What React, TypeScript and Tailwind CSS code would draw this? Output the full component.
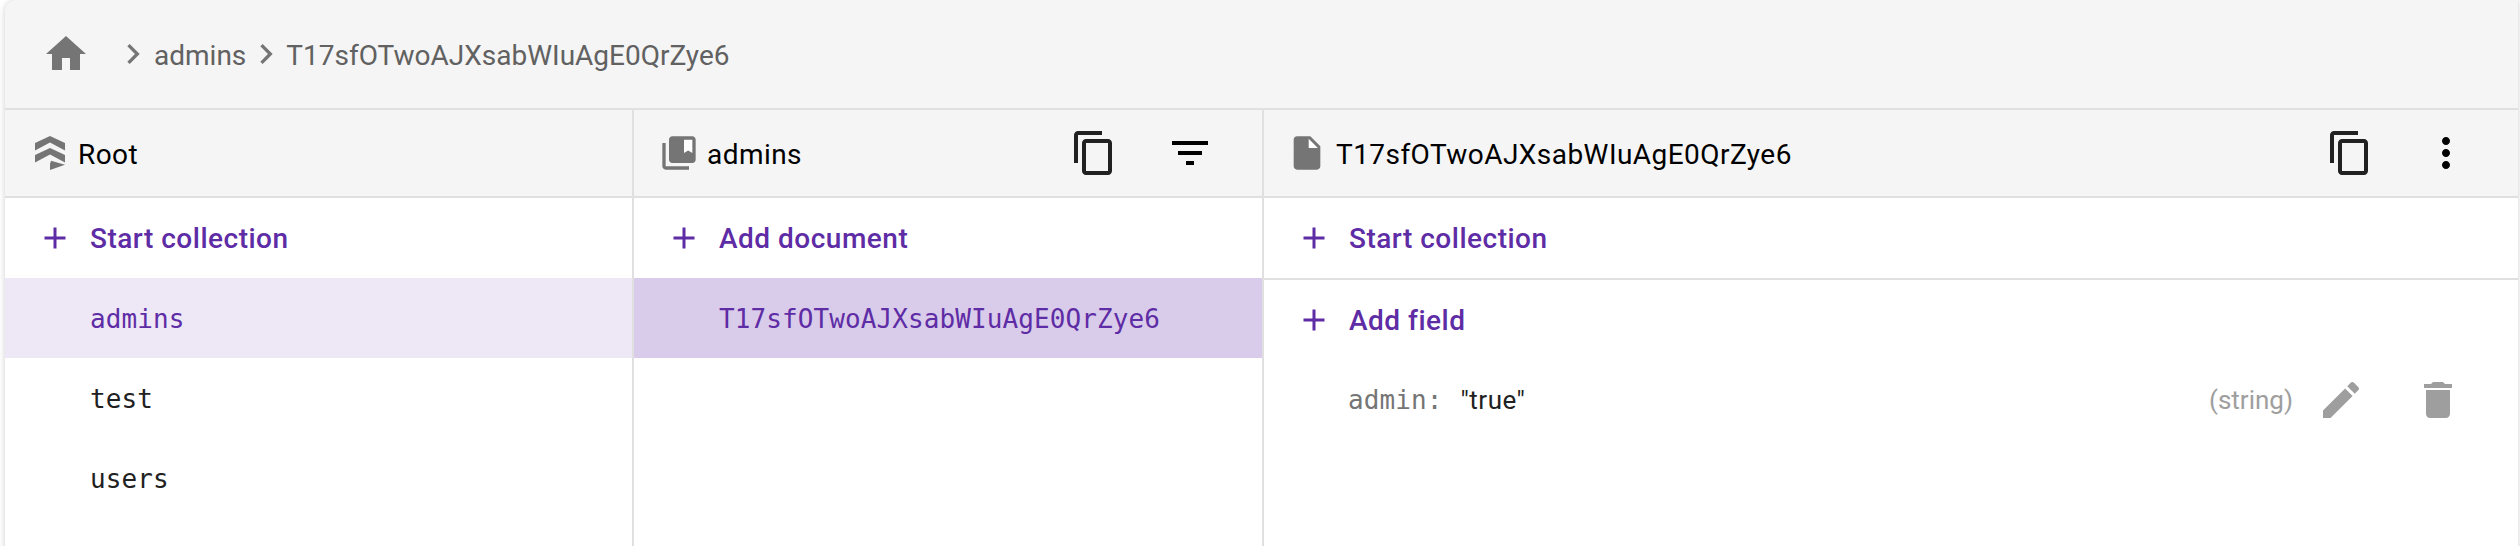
function Icon({ d, className }: { d: string; className: string }) {
  return (
    <svg viewBox="0 0 24 24" fill="currentColor" className={className}>
      <path d={d} />
    </svg>
  );
}

const HOME = "M10 20v-6h4v6h5v-8h3L12 3 2 12h3v8z";
const CHEVRON = "M10 6L8.59 7.41 13.17 12l-4.58 4.59L10 18l6-6z";
const ADD = "M19 13h-6v6h-2v-6H5v-2h6V5h2v6h6v2z";
const COPY =
  "M16 1H4c-1.1 0-2 .9-2 2v14h2V3h12V1zm3 4H8c-1.1 0-2 .9-2 2v14c0 1.1.9 2 2 2h11c1.1 0 2-.9 2-2V7c0-1.1-.9-2-2-2zm0 16H8V7h11v14z";
const FILTER = "M10 18h4v-2h-4v2zM3 6v2h18V6H3zm3 7h12v-2H6v2z";
const MORE =
  "M12 8c1.1 0 2-.9 2-2s-.9-2-2-2-2 .9-2 2 .9 2 2 2zm0 2c-1.1 0-2 .9-2 2s.9 2 2 2 2-.9 2-2-.9-2-2-2zm0 6c-1.1 0-2 .9-2 2s.9 2 2 2 2-.9 2-2-.9-2-2-2z";
const EDIT =
  "M3 17.25V21h3.75L17.81 9.94l-3.75-3.75L3 17.25zM20.71 7.04c.39-.39.39-1.02 0-1.41l-2.34-2.34c-.39-.39-1.02-.39-1.41 0l-1.83 1.83 3.75 3.75 1.83-1.83z";
const TRASH = "M6 19c0 1.1.9 2 2 2h8c1.1 0 2-.9 2-2V7H6v12zM19 4h-3.5l-1-1h-5l-1 1H5v2h14V4z";

function RootIcon() {
  return (
    <svg viewBox="0 0 30 34" fill="#757575" className="w-[30px] h-[34px] shrink-0">
      <path d="M0 7 15 0l15 7v7.5L15 6.5 0 14.5z" />
      <path d="M0 19l15-7 15 7v7.5l-15-8-15 8z" />
      <path d="M16 24.7l14 4L15 34v-6z" />
    </svg>
  );
}

function CollectionIcon() {
  return (
    <svg viewBox="0 0 24 24" className="w-10 h-10 shrink-0">
      <path
        fill="#757575"
        d="M4 6H2v14c0 1.1.9 2 2 2h14v-2H4V6zm16-4H8c-1.1 0-2 .9-2 2v12c0 1.1.9 2 2 2h12c1.1 0 2-.9 2-2V4c0-1.1-.9-2-2-2z"
      />
      <path fill="#ffffff" d="M20 12l-2.5-1.5L15 12V4h5v8z" />
    </svg>
  );
}

function DocIcon() {
  return (
    <svg viewBox="0 0 24 24" className="w-10 h-10 shrink-0">
      <path fill="#757575" d="M6 2c-1.1 0-1.99.9-1.99 2L4 20c0 1.1.89 2 1.99 2H18c1.1 0 2-.9 2-2V8l-6-6H6z" />
      <path fill="#ffffff" d="M13 9V3.5L18.5 9H13z" />
    </svg>
  );
}

function ActionRow({ label, border }: { label: string; border?: boolean }) {
  return (
    <div
      className={`h-20 flex items-center gap-[17px] pl-8 text-[#5e2ca5] font-medium text-[28px] tracking-[0.5px] ${
        border ? "box-content border-b-2 border-[#e0e0e0]" : ""
      }`}
    >
      <Icon d={ADD} className="w-9 h-9 shrink-0" />
      <span className="pt-px">{label}</span>
    </div>
  );
}

const MONO = "font-['DejaVu_Sans_Mono',monospace] text-[26px] tracking-[0.1px]";

export default function App() {
  return (
    <div className="h-[546px] w-[2520px] overflow-hidden bg-white font-['Roboto',sans-serif]">
      <div className="ml-[5px] mr-[2px] h-[600px] rounded-tl-[12px] bg-white shadow-[0_0_6px_rgba(0,0,0,0.2)] overflow-hidden">
        {/* breadcrumb */}
        <div className="box-content h-[108px] bg-[#f5f5f5] border-b-2 border-[#e0e0e0] flex items-center pl-[37px] text-[28px] text-[#616161]">
          <Icon d={HOME} className="w-12 h-12 mr-[23px] text-[#757575]" />
          <Icon d={CHEVRON} className="w-10 h-10 text-[#757575]" />
          <span className="ml-px pt-[3px]">admins</span>
          <Icon d={CHEVRON} className="w-10 h-10 text-[#757575]" />
          <span className="pt-[3px]">T17sfOTwoAJXsabWIuAgE0QrZye6</span>
        </div>

        <div className="flex">
          {/* root column */}
          <div className="w-[629px] shrink-0 border-r-2 border-[#e0e0e0] h-[440px]">
            <div className="h-[88px] bg-[#f5f5f5] border-b-2 border-[#e0e0e0] flex items-center gap-[13px] pl-[30px] text-[28px] tracking-[0.45px] text-black">
              <RootIcon />
              <span className="pt-[3px]">Root</span>
            </div>
            <ActionRow label="Start collection" />
            <div className={`h-20 flex items-center pl-[85px] pt-[3px] bg-[#ede7f6] text-[#5e2ca5] ${MONO}`}>admins</div>
            <div className={`h-20 flex items-center pl-[85px] pt-[3px] text-[#212121] ${MONO}`}>test</div>
            <div className={`h-20 flex items-center pl-[85px] pt-[3px] text-[#212121] ${MONO}`}>users</div>
          </div>

          {/* documents column */}
          <div className="w-[630px] shrink-0 border-r-2 border-[#e0e0e0] h-[440px]">
            <div className="h-[88px] bg-[#f5f5f5] border-b-2 border-[#e0e0e0] flex items-center pl-[25px] text-[28px] tracking-[0.45px] text-black">
              <CollectionIcon />
              <span className="ml-2 pt-[3px]">admins</span>
              <Icon d={COPY} className="w-12 h-12 ml-auto text-[#212121]" />
              <Icon d={FILTER} className="w-12 h-12 mx-12 text-black" />
            </div>
            <ActionRow label="Add document" />
            <div className={`h-20 flex items-center pl-[85px] pt-[3px] bg-[#d9cbea] text-[#5e2ca5] ${MONO}`}>
              T17sfOTwoAJXsabWIuAgE0QrZye6
            </div>
          </div>

          {/* document column */}
          <div className="flex-1 h-[440px]">
            <div className="h-[88px] bg-[#f5f5f5] border-b-2 border-[#e0e0e0] flex items-center pl-[23px] text-[28px] tracking-[0.45px] text-black">
              <DocIcon />
              <span className="ml-[9px] pt-[3px]">T17sfOTwoAJXsabWIuAgE0QrZye6</span>
              <Icon d={COPY} className="w-12 h-12 ml-auto text-[#212121]" />
              <Icon d={MORE} className="w-12 h-12 mx-12 text-black" />
            </div>
            <ActionRow label="Start collection" border />
            <ActionRow label="Add field" />
            <div className="h-20 flex items-center pl-[84px] pr-[56px]">
              <span className={`text-[#757575] ${MONO}`}>admin:</span>
              <span className="ml-[18px] text-[26px] tracking-[0.5px] text-[#212121]">"true"</span>
              <span className="ml-auto text-[26px] text-[#9e9e9e]">(string)</span>
              <Icon d={EDIT} className="w-12 h-12 ml-6 text-[#9e9e9e]" />
              <Icon d={TRASH} className="w-12 h-12 ml-[49px] text-[#9e9e9e]" />
            </div>
          </div>
        </div>
      </div>
    </div>
  );
}
